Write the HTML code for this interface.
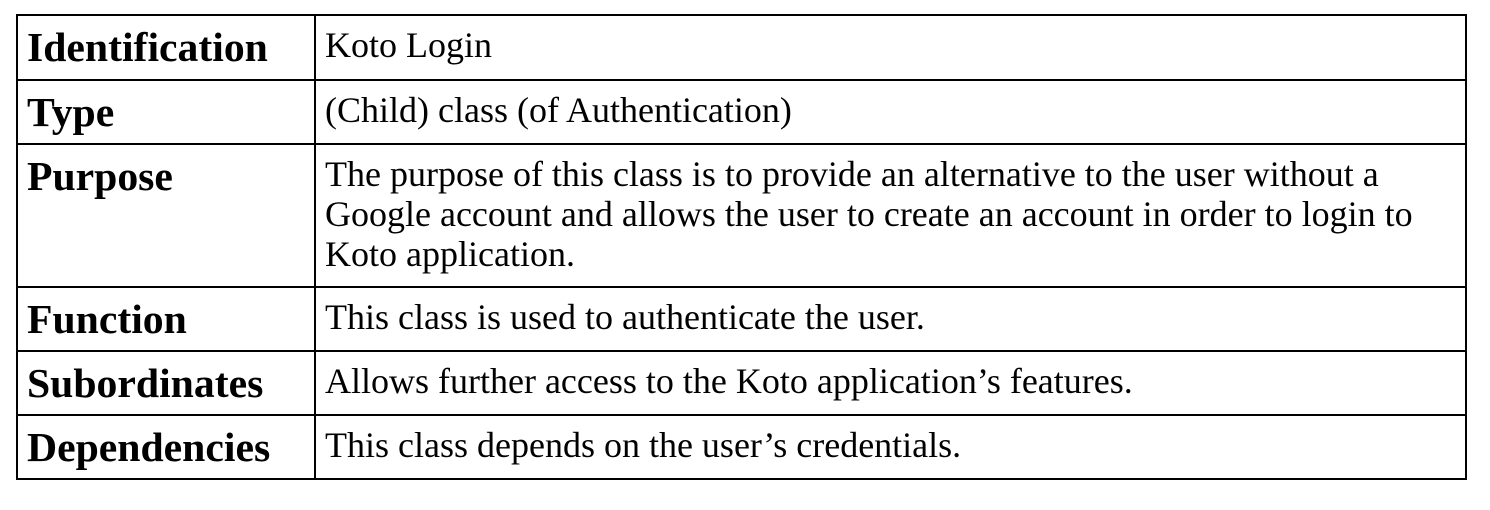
<!DOCTYPE html>
<html><head><meta charset="utf-8"><style>
html,body{margin:0;padding:0;background:#fff;width:1490px;height:510px;overflow:hidden;position:relative}
.l{position:absolute;background:#000}
.t{position:absolute;font-family:"Liberation Serif",serif;white-space:nowrap;color:#000;line-height:40px}
.b{font-weight:bold;font-size:41.7px;left:27px}
.r{font-size:36px;left:325px}
</style></head><body>
<div class="l" style="left:16px;top:14px;width:1451px;height:2px"></div>
<div class="l" style="left:16px;top:79px;width:1451px;height:2px"></div>
<div class="l" style="left:16px;top:143px;width:1451px;height:2px"></div>
<div class="l" style="left:16px;top:286px;width:1451px;height:2px"></div>
<div class="l" style="left:16px;top:350px;width:1451px;height:2px"></div>
<div class="l" style="left:16px;top:414px;width:1451px;height:2px"></div>
<div class="l" style="left:16px;top:478px;width:1451px;height:2px"></div>
<div class="l" style="left:16px;top:14px;width:2px;height:466px"></div>
<div class="l" style="left:314px;top:14px;width:2px;height:466px"></div>
<div class="l" style="left:1465px;top:14px;width:2px;height:466px"></div>

<div class="t b" style="top:28px">Identification</div>
<div class="t r" style="top:25px">Koto Login</div>
<div class="t b" style="top:93px">Type</div>
<div class="t r" style="top:90px">(Child) class (of Authentication)</div>
<div class="t b" style="top:157px">Purpose</div>
<div class="t r" style="top:154px">The purpose of this class is to provide an alternative to the user without a<br>Google account and allows the user to create an account in order to login to<br>Koto application.</div>
<div class="t b" style="top:300px">Function</div>
<div class="t r" style="top:297px">This class is used to authenticate the user.</div>
<div class="t b" style="top:364px">Subordinates</div>
<div class="t r" style="top:361px">Allows further access to the Koto application’s features.</div>
<div class="t b" style="top:428px">Dependencies</div>
<div class="t r" style="top:425px">This class depends on the user’s credentials.</div>
</body></html>
